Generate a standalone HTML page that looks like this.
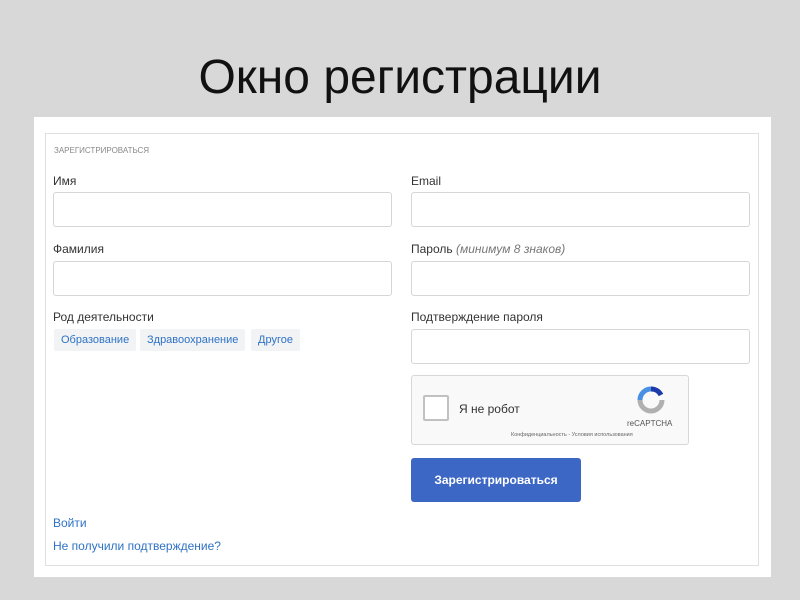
<!DOCTYPE html>
<html><head><meta charset="utf-8"><style>
*{box-sizing:border-box;margin:0;padding:0}
body{width:800px;height:600px;background:#d8d8d8;position:relative;font-family:"Liberation Sans",sans-serif;overflow:hidden}
.title{position:absolute;left:0;width:800px;top:50px;text-align:center;font-size:48px;color:#111}
.panel{position:absolute;left:34px;top:117px;width:737px;height:460px;background:#fff}
.a{position:absolute}
.lbl{font-size:12px;color:#333}
.inp{border:1px solid #d6d6d6;border-radius:3px;background:#fff;height:35px;width:339px}
.tag{background:#f1f3f5;color:#2f72c4;font-size:11px;padding:5px 7px;border-radius:2px}
.link{color:#2f72c4;font-size:12px}
</style></head><body>
<div class="title">Окно регистрации</div>
<div class="panel"></div>
<div class="a" style="left:45px;top:133px;width:714px;height:433px;border:1px solid #e0e0e0"></div>
<div class="a" style="left:54px;top:146px;font-size:8px;color:#888">ЗАРЕГИСТРИРОВАТЬСЯ</div>
<div class="a lbl" style="left:53px;top:174px">Имя</div>
<div class="a inp" style="left:53px;top:192px"></div>
<div class="a lbl" style="left:53px;top:242px">Фамилия</div>
<div class="a inp" style="left:53px;top:261px"></div>
<div class="a lbl" style="left:53px;top:310px">Род деятельности</div>
<div class="a tag" style="left:54px;top:329px">Образование</div>
<div class="a tag" style="left:140px;top:329px">Здравоохранение</div>
<div class="a tag" style="left:251px;top:329px">Другое</div>
<div class="a lbl" style="left:411px;top:174px">Email</div>
<div class="a inp" style="left:411px;top:192px"></div>
<div class="a lbl" style="left:411px;top:242px">Пароль <i style="color:#777">(минимум 8 знаков)</i></div>
<div class="a inp" style="left:411px;top:261px"></div>
<div class="a lbl" style="left:411px;top:310px">Подтверждение пароля</div>
<div class="a inp" style="left:411px;top:329px"></div>
<div class="a" style="left:411px;top:375px;width:278px;height:70px;border:1px solid #d8d8d8;border-radius:3px;background:#f9f9f9"></div>
<div class="a" style="left:423px;top:395px;width:26px;height:26px;border:2px solid #c1c1c1;border-radius:2px;background:#fff"></div>
<div class="a" style="left:459px;top:402px;font-size:12px;color:#333">Я не робот</div>
<svg class="a" style="left:636px;top:385px" width="30" height="30" viewBox="0 0 30 30"><path d="M15 4a11 11 0 0 1 10 6" stroke="#1c3aa9" stroke-width="5" fill="none"/><path d="M4 15a11 11 0 0 1 11-11" stroke="#4a90e2" stroke-width="5" fill="none"/><path d="M26 15a11 11 0 0 1-22 0" stroke="#b0b0b0" stroke-width="5" fill="none"/></svg>
<div class="a" style="left:627px;top:419px;font-size:8px;color:#555">reCAPTCHA</div>
<div class="a" style="left:511px;top:432px;font-size:5.5px;color:#666">Конфиденциальность - Условия использования</div>
<div class="a" style="left:411px;top:458px;width:170px;height:44px;background:#3d67c4;border-radius:3px;color:#fff;font-size:12px;font-weight:bold;text-align:center;line-height:44px">Зарегистрироваться</div>
<div class="a link" style="left:53px;top:516px">Войти</div>
<div class="a link" style="left:53px;top:539px">Не получили подтверждение?</div>
</body></html>
